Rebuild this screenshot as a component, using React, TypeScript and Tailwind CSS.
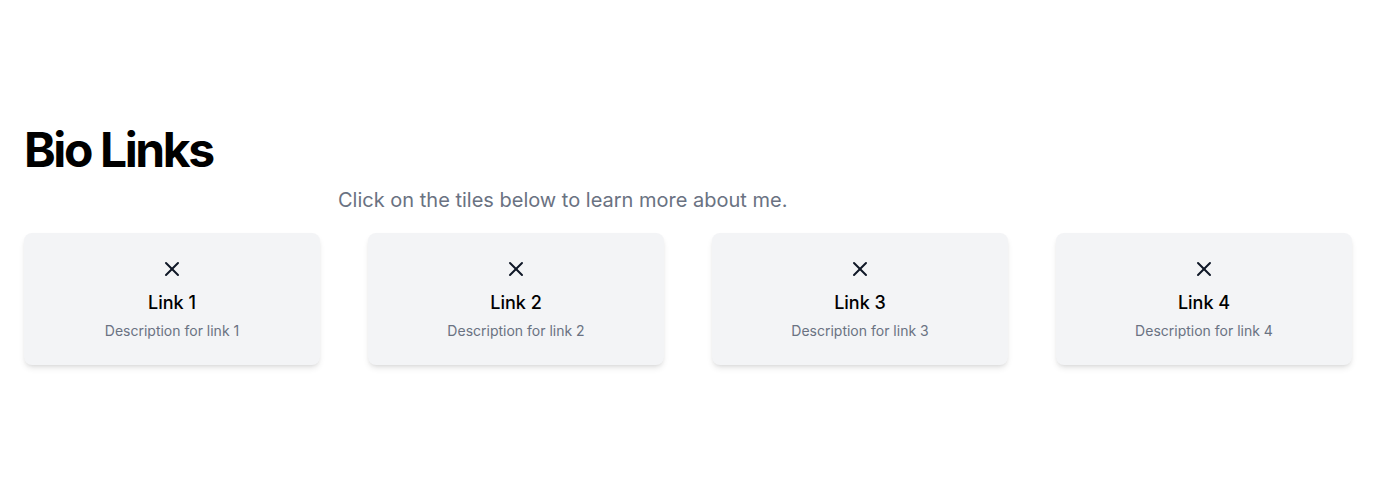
import React from "react";

const XIcon = () => (
  <svg width="24" height="24" viewBox="0 0 24 24" fill="none" stroke="currentColor" strokeWidth="2" strokeLinecap="round" strokeLinejoin="round">
    <path d="M18 6 6 18" />
    <path d="m6 6 12 12" />
  </svg>
);

export default function App() {
  const links = [1, 2, 3, 4];
  return (
    <div className="min-h-screen bg-white font-['Inter',sans-serif] px-6 pt-[126px]">
      <h1 className="text-5xl font-bold tracking-tighter text-black">Bio Links</h1>
      <p className="mt-3 ml-[314px] text-xl text-gray-500">Click on the tiles below to learn more about me.</p>
      <div className="mt-[19px] grid grid-cols-4 gap-12">
        {links.map((n) => (
          <div key={n} className="flex flex-col items-center rounded-lg bg-gray-100 p-6 shadow-md">
            <div className="text-gray-900">
              <XIcon />
            </div>
            <div className="mt-2 text-lg font-medium text-black">Link {n}</div>
            <div className="mt-1 text-sm text-gray-500">Description for link {n}</div>
          </div>
        ))}
      </div>
    </div>
  );
}
